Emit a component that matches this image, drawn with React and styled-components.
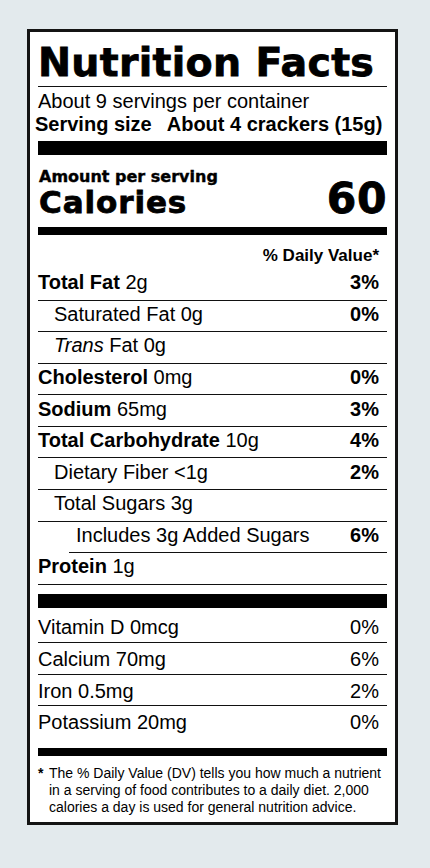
import React from 'react';
import styled, { createGlobalStyle } from 'styled-components';

const GlobalStyle = createGlobalStyle`
  html, body {
    margin: 0;
    padding: 0;
    background: #e3eaed;
  }
  body {
    font-family: "Liberation Sans", Arial, sans-serif;
    color: #000;
  }
`;

const Page = styled.div`
  width: 430px;
  min-height: 868px;
  padding-top: 29px;
  box-sizing: border-box;
`;

const Label = styled.section`
  box-sizing: border-box;
  width: 371px;
  margin-left: 27px;
  background: #fff;
  border: 3px solid #141414;
  padding: 10px 8px 6px 8px;
`;

// heavy display face, stroked a little to get close to Helvetica Black
const heavy = `
  font-family: "DejaVu Sans", sans-serif;
  font-weight: 700;
  -webkit-text-stroke: 0.8px #000;
`;

const Title = styled.h1`
  margin: 0;
  ${heavy}
  font-size: 39.5px;
  letter-spacing: 0.3px;
  line-height: 40px;
  padding-bottom: 3.5px;
  border-bottom: 1px solid #111;
  white-space: nowrap;
`;

const Servings = styled.div`
  margin-top: 3.5px;
  font-size: 20px;
  line-height: 23px;
`;

const ServingSize = styled.div`
  display: flex;
  gap: 15px;
  margin-left: -3px;
  font-weight: 700;
  font-size: 20px;
  line-height: 23px;
  white-space: nowrap;
`;

const Bar = styled.div`
  height: ${p => p.$h}px;
  background: #000;
  margin-top: ${p => p.$mt || 0}px;
  margin-bottom: ${p => p.$mb || 0}px;
`;

const Amount = styled.div`
  margin-top: 15px;
  ${heavy}
  -webkit-text-stroke: 0.4px #000;
  font-size: 16px;
  line-height: 14px;
  padding-left: 1px;
`;

const CaloriesRow = styled.div`
  display: flex;
  justify-content: space-between;
  align-items: baseline;
  ${heavy}
  line-height: 30px;
  margin-bottom: 10.5px;
`;

const CaloriesLabel = styled.span`
  font-size: 31px;
  letter-spacing: 0.9px;
  padding-left: 1px;
`;

const CaloriesValue = styled.span`
  font-size: 42.5px;
  letter-spacing: 0.5px;
`;

const DVHeader = styled.div`
  margin: 11px 0 3px;
  padding-right: 8px;
  text-align: right;
  font-weight: 700;
  font-size: 17px;
  line-height: 20px;
`;

const Row = styled.div`
  display: flex;
  justify-content: space-between;
  font-size: 20px;
  line-height: 24px;
  padding: 1.2px 8px 5.4px ${p => (p.$indent === 1 ? 16 : p.$indent === 2 ? 7 : 0)}px;
  margin-left: ${p => (p.$indent === 2 ? 31 : 0)}px;
  border-bottom: 1px solid #111;
`;

const VitRow = styled.div`
  display: flex;
  justify-content: space-between;
  font-size: 20px;
  line-height: 24px;
  padding: 4px 8px 2.8px 0;
  border-bottom: ${p => (p.$last ? 'none' : '1px solid #111')};
`;

const Strong = styled.b`
  font-weight: 700;
`;

const Percent = styled.span`
  font-weight: ${p => (p.$bold ? 700 : 400)};
`;

const Footnote = styled.div`
  display: flex;
  margin-top: 9.3px;
  font-size: 14px;
  line-height: 17.2px;
`;

const Star = styled.span`
  flex: 0 0 11px;
  font-weight: 700;
`;

const nutrients = [
  { name: 'Total Fat', amount: '2g', dv: '3%', bold: true },
  { name: 'Saturated Fat', amount: '0g', dv: '0%', indent: 1 },
  { name: <><i>Trans</i> Fat</>, amount: '0g', indent: 1 },
  { name: 'Cholesterol', amount: '0mg', dv: '0%', bold: true },
  { name: 'Sodium', amount: '65mg', dv: '3%', bold: true },
  { name: 'Total Carbohydrate', amount: '10g', dv: '4%', bold: true },
  { name: 'Dietary Fiber', amount: '<1g', dv: '2%', indent: 1 },
  { name: 'Total Sugars', amount: '3g', indent: 1 },
  { name: 'Includes 3g Added Sugars', amount: '', dv: '6%', indent: 2 },
  { name: 'Protein', amount: '1g', bold: true },
];

const vitamins = [
  { name: 'Vitamin D 0mcg', dv: '0%' },
  { name: 'Calcium 70mg', dv: '6%' },
  { name: 'Iron 0.5mg', dv: '2%' },
  { name: 'Potassium 20mg', dv: '0%' },
];

export default function App() {
  return (
    <Page>
      <GlobalStyle />
      <Label>
        <Title>Nutrition Facts</Title>
        <Servings>About 9 servings per container</Servings>
        <ServingSize>
          <span>Serving size</span>
          <span>About 4 crackers (15g)</span>
        </ServingSize>
        <Bar $h={14} $mt={4.5} />
        <Amount>Amount per serving</Amount>
        <CaloriesRow>
          <CaloriesLabel>Calories</CaloriesLabel>
          <CaloriesValue>60</CaloriesValue>
        </CaloriesRow>
        <Bar $h={8} />
        <DVHeader>% Daily Value*</DVHeader>
        {nutrients.map((n, i) => (
          <Row key={i} $indent={n.indent || 0}>
            <span>
              {n.bold ? <Strong>{n.name}</Strong> : n.name}
              {n.amount ? ` ${n.amount}` : ''}
            </span>
            {n.dv && <Percent $bold>{n.dv}</Percent>}
          </Row>
        ))}
        <Bar $h={14} $mt={9.5} $mb={2.8} />
        {vitamins.map((v, i) => (
          <VitRow key={i} $last={i === vitamins.length - 1}>
            <span>{v.name}</span>
            <Percent>{v.dv}</Percent>
          </VitRow>
        ))}
        <Bar $h={8} $mt={10.3} />
        <Footnote>
          <Star>*</Star>
          <span>
            The % Daily Value (DV) tells you how much a nutrient in a serving of food
            contributes to a daily diet. 2,000 calories a day is used for general
            nutrition advice.
          </span>
        </Footnote>
      </Label>
    </Page>
  );
}
